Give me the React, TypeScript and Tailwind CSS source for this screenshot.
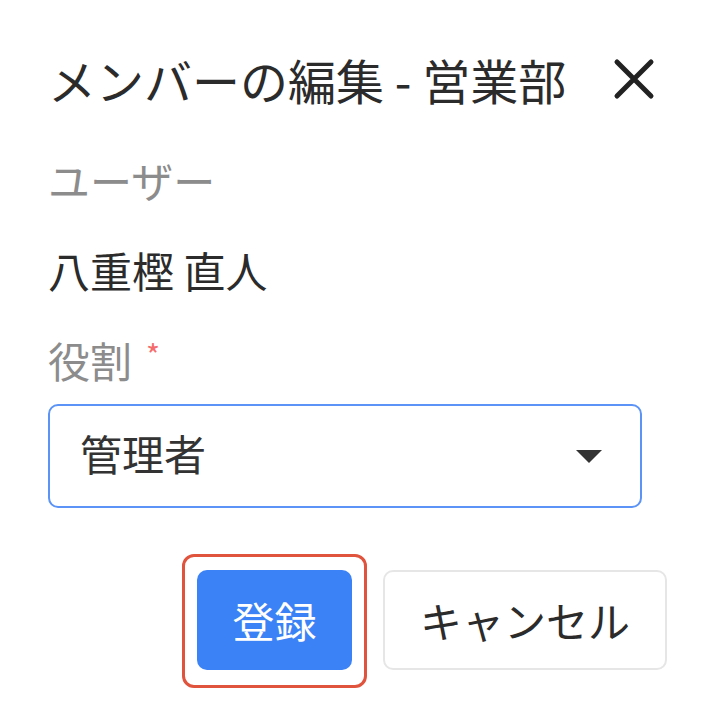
import React from "react";

const font = { fontFamily: '"Noto Sans CJK JP", "Noto Sans", sans-serif' };

const CloseIcon: React.FC = () => (
  <svg width="44" height="44" viewBox="0 0 44 44" className="text-[#222]">
    <path d="M5 5 L39 39 M39 5 L5 39" stroke="currentColor" strokeWidth="5" strokeLinecap="round" />
  </svg>
);

const App: React.FC = () => {
  return (
    <div className="min-h-screen w-[713px] bg-white pl-[48px]" style={font}>
      {/* Header */}
      <div className="flex w-[608px] items-center justify-between pt-[55px]">
        <h2 className="text-[48px] leading-[48px] font-normal text-[#2b2b2b]">メンバーの編集 - 営業部</h2>
        <button className="flex h-[44px] w-[44px] items-center justify-center">
          <CloseIcon />
        </button>
      </div>

      {/* User */}
      <div className="mt-[56px] text-[42px] leading-[42px] text-[#8c8c8c]">ユーザー</div>
      <div className="mt-[48px] text-[42px] leading-[42px] text-[#2b2b2b]">八重樫 直人</div>

      {/* Role */}
      <div className="mt-[48px] flex items-start text-[42px] leading-[42px] text-[#8c8c8c]">
        <span>役割</span>
        <span className="ml-[14px] text-[30px] leading-[30px] text-[#f56c6c]">*</span>
      </div>

      <div className="mt-[23px] flex h-[104px] w-[594px] items-center justify-between rounded-[10px] border-2 border-[#5b93f6] pl-[30px] pr-[38px]">
        <span className="-mt-[6px] text-[42px] leading-[42px] text-[#333]">管理者</span>
        <svg width="26" height="13" viewBox="0 0 26 13">
          <path d="M0 0 H26 L13 13 Z" fill="#333" />
        </svg>
      </div>

      {/* Actions */}
      <div className="mt-[62px] flex w-[619px] items-center justify-end gap-[31px]">
        <div className="relative">
          <div className="absolute -left-[15px] -right-[15px] -top-[16px] -bottom-[18px] rounded-[12px] border-[3px] border-[#e0533d]" />
          <button className="relative flex h-[100px] w-[155px] items-center justify-center rounded-[10px] bg-[#3b82f6] text-[42px] leading-[42px] text-white">
            登録
          </button>
        </div>
        <button className="flex h-[100px] w-[284px] items-center justify-center rounded-[10px] border-2 border-[#e6e6e6] bg-white text-[42px] leading-[42px] text-[#2b2b2b]">
          キャンセル
        </button>
      </div>
    </div>
  );
};

export default App;
